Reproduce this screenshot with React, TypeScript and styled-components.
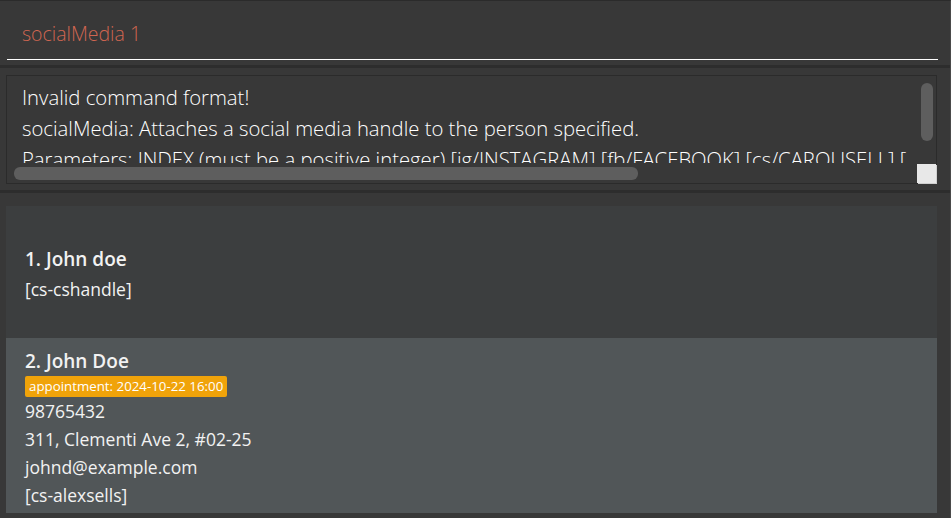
import React from 'react';
import styled, { createGlobalStyle } from 'styled-components';

const GlobalStyle = createGlobalStyle`
  html, body {
    margin: 0;
    padding: 0;
    background: #383838;
  }
  body {
    font-family: 'Open Sans', 'Noto Sans', sans-serif;
  }
`

const Window = styled.div`
  width: 951px;
  height: 518px;
  overflow: hidden;
  box-sizing: border-box;
  display: flex;
  flex-direction: column;
  background: #383838;
  border-top: 1px solid #2b2b2b;
  border-right: 1px solid #4a4a4a;
`

const CommandPane = styled.div`
  height: 67px;
  box-sizing: border-box;
  padding: 0 12px 0 7px;
  border-bottom: 3px solid #2d2d2d;
  flex-shrink: 0;
`

const CommandField = styled.div`
  height: 59px;
  box-sizing: border-box;
  padding: 20px 0 0 15px;
  border-bottom: 1px solid #ffffff;
  font-size: 19.5px;
  font-weight: 300;
  line-height: 26px;
  color: #d06651;
`

const ResultPane = styled.div`
  height: 125px;
  box-sizing: border-box;
  padding: 7px 13px 6px 6px;
  border-bottom: 3px solid #2d2d2d;
  flex-shrink: 0;
`

const ResultBox = styled.div`
  position: relative;
  height: 109px;
  box-sizing: border-box;
  border: 1px solid #2b2b2b;
  background: #383838;
`

const ResultText = styled.div`
  height: 87px;
  overflow: hidden;
  box-sizing: border-box;
  padding: 6px 0 0 15px;
  white-space: pre;
  font-size: 20.3px;
  font-weight: 300;
  line-height: 31px;
  color: #ffffff;
`

const HThumb = styled.div`
  position: absolute;
  left: 7px;
  top: 91px;
  width: 624px;
  height: 13px;
  border-radius: 6px;
  background: #5e5e5e;
`

const VThumb = styled.div`
  position: absolute;
  left: 914px;
  top: 7px;
  width: 12px;
  height: 58px;
  border-radius: 6px;
  background: #5e5e5e;
`

const Corner = styled.div`
  position: absolute;
  left: 910px;
  top: 88px;
  width: 19px;
  height: 19px;
  background: #e8e8e8;
  box-shadow: 1px 1px 0 #cfcfcf;
`

const ListPane = styled.div`
  flex: 1;
  padding: 13px 13px 0 6px;
  display: flex;
  flex-direction: column;
`

const Card = styled.div<{ $bg: string; $pad: string; $gap?: number }>`
  background: ${p => p.$bg};
  padding: ${p => p.$pad};
  display: flex;
  flex-direction: column;
  align-items: flex-start;
  gap: ${p => p.$gap || 0}px;
  color: #f2f2f2;
`

const Name = styled.div`
  font-size: 19px;
  font-weight: 600;
  line-height: 28px;
`

const Detail = styled.div`
  font-size: 17.5px;
  font-weight: 500;
  line-height: 28px;
`

const Badge = styled.span`
  margin-top: 1px;
  padding: 0 4px;
  height: 21px;
  line-height: 21px;
  font-size: 13.3px;
  font-weight: 500;
  color: #ffffff;
  background: #f0a30a;
  border-radius: 2px;
`

const resultLines = [
  'Invalid command format!',
  'socialMedia: Attaches a social media handle to the person specified.',
  'Parameters: INDEX (must be a positive integer) [ig/INSTAGRAM] [fb/FACEBOOK] [cs/CAROUSELL] [',
].join('\n')

export default function App() {
  return (
    <Window>
      <GlobalStyle />
      <CommandPane>
        <CommandField>socialMedia 1</CommandField>
      </CommandPane>
      <ResultPane>
        <ResultBox>
          <ResultText>{resultLines}</ResultText>
          <HThumb />
          <VThumb />
          <Corner />
        </ResultBox>
      </ResultPane>
      <ListPane>
        <Card $bg="#3c3e3f" $pad="39px 19px 35px" $gap={2}>
          <Name>1. John doe</Name>
          <Detail>[cs-cshandle]</Detail>
        </Card>
        <Card $bg="#515658" $pad="9px 19px 4px">
          <Name>2. John Doe</Name>
          <Badge>appointment: 2024-10-22 16:00</Badge>
          <Detail>98765432</Detail>
          <Detail>311, Clementi Ave 2, #02-25</Detail>
          <Detail>johnd@example.com</Detail>
          <Detail>[cs-alexsells]</Detail>
        </Card>
      </ListPane>
    </Window>
  )
}
